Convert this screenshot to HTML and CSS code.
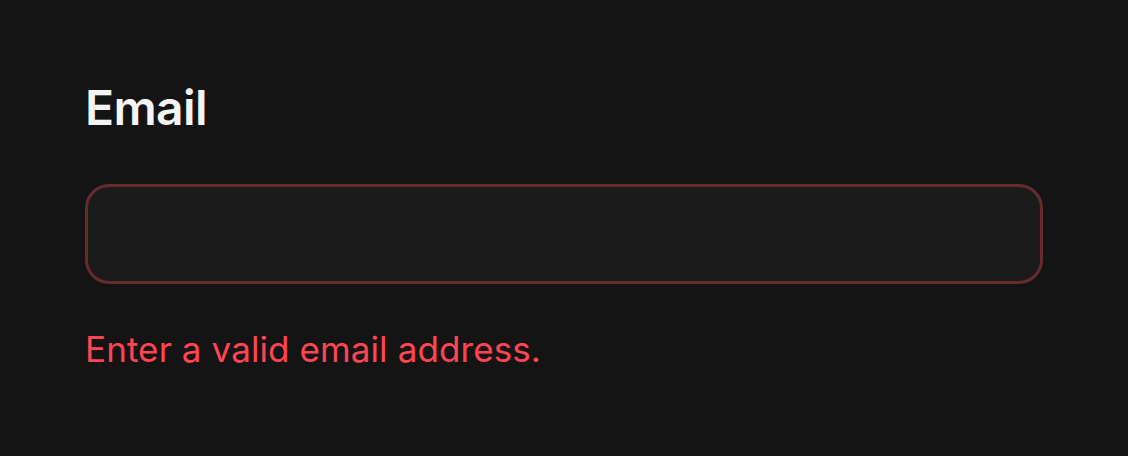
FILE: index.html
```html
<!DOCTYPE html>
<html>
<head>
<meta charset="utf-8">
<link rel="stylesheet" href="styles.css">
</head>
<body>
<div class="field">
  <label class="label" for="email">Email</label>
  <input class="input" id="email" type="email">
  <p class="error">Enter a valid email address.</p>
</div>
</body>
</html>
```
FILE: styles.css
```css
html, body {
  margin: 0;
  padding: 0;
  background: #141414;
  height: 100%;
}
body {
  font-family: Inter, "Noto Sans", sans-serif;
}
.field {
  display: flex;
  flex-direction: column;
  padding: 78px 85px 0 85px;
  width: 958px;
}
.label {
  color: #f5f5f5;
  font-size: 48px;
  font-weight: 600;
  line-height: 60px;
  letter-spacing: -0.6px;
}
.input {
  margin-top: 46px;
  box-sizing: border-box;
  height: 100px;
  width: 958px;
  background: #1b1b1b;
  border: 3px solid #672a2d;
  border-radius: 24px;
  outline: none;
}
.error {
  margin: 43px 0 0 0;
  color: #ff4552;
  font-size: 35px;
  line-height: 44px;
  font-weight: 400;
  letter-spacing: 0.1px;
}
```
